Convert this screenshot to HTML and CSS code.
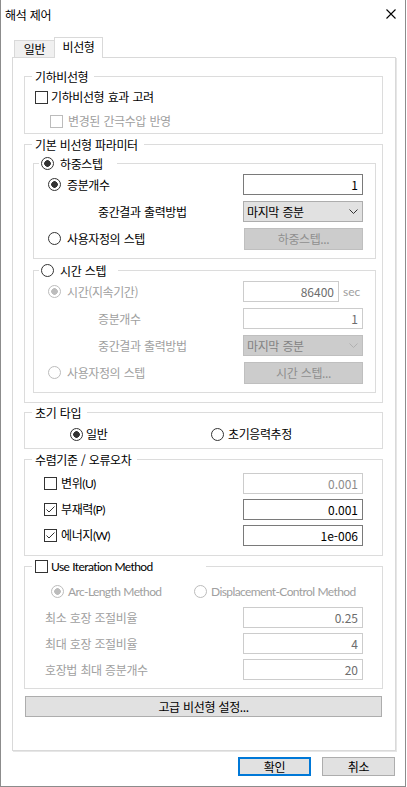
FILE: index.html
```html
<!DOCTYPE html>
<html lang="ko">
<head>
<meta charset="utf-8">
<title>해석 제어</title>
<link rel="stylesheet" href="styles.css">
</head>
<body>
<div class="window">
  <div class="titlebar">
    <span class="title">해석 제어</span>
    <svg class="close" width="10" height="10" viewBox="0 0 10 10"><path d="M0.5 0.5L9.5 9.5M9.5 0.5L0.5 9.5" stroke="#000" stroke-width="1.1" fill="none"/></svg>
  </div>
  <div class="tabs">
    <div class="tab">일반</div>
    <div class="tab active">비선형</div>
  </div>
  <div class="panel">
    <fieldset class="group">
      <legend class="lg">기하비선형</legend>
      <div class="gbody g1">
        <div class="crow"><span class="cb"></span><span class="lbl">기하비선형 효과 고려</span></div>
        <div class="crow indent dis"><span class="cb dis"></span><span class="lbl">변경된 간극수압 반영</span></div>
      </div>
    </fieldset>

    <fieldset class="group g2">
      <legend class="lg">기본 비선형 파라미터</legend>
      <div class="gbody g2body">
        <fieldset class="group inner">
          <legend class="lgc w78"><span class="rb on"></span><span class="lbl">하중스텝</span></legend>
          <div class="ibody">
            <div class="row"><span class="rb on"></span><span class="lbl">증분개수</span><span class="tb">1</span></div>
            <div class="row"><span class="lbl sub">중간결과 출력방법</span><span class="combo"><span>마지막 증분</span><svg width="9" height="5" viewBox="0 0 9 5"><path d="M0.5 0.5L4.5 4.5L8.5 0.5" stroke="#333" fill="none"/></svg></span></div>
            <div class="row"><span class="rb"></span><span class="lbl">사용자정의 스텝</span><span class="btn dis wide">하중스텝...</span></div>
          </div>
        </fieldset>
        <fieldset class="group inner second">
          <legend class="lgc w79"><span class="rb"></span><span class="lbl">시간 스텝</span></legend>
          <div class="ibody dis">
            <div class="row"><span class="rb dis on"></span><span class="lbl">시간(지속기간)</span><span class="ctl"><span class="tb dis short">86400</span><span class="unit lat">sec</span></span></div>
            <div class="row"><span class="lbl sub">증분개수</span><span class="tb dis">1</span></div>
            <div class="row"><span class="lbl sub">중간결과 출력방법</span><span class="combo dis"><span>마지막 증분</span><svg width="9" height="5" viewBox="0 0 9 5"><path d="M0.5 0.5L4.5 4.5L8.5 0.5" stroke="#b0b0b0" fill="none"/></svg></span></div>
            <div class="row"><span class="rb dis"></span><span class="lbl">사용자정의 스텝</span><span class="btn dis wide">시간 스텝...</span></div>
          </div>
        </fieldset>
      </div>
    </fieldset>

    <fieldset class="group g3">
      <legend class="lg">초기 타입</legend>
      <div class="gbody g3body">
        <span class="opt first"><span class="rb on"></span><span class="lbl">일반</span></span>
        <span class="opt"><span class="rb"></span><span class="lbl">초기응력추정</span></span>
      </div>
    </fieldset>

    <fieldset class="group g4">
      <legend class="lg">수렴기준 / 오류오차</legend>
      <div class="gbody g4body">
        <div class="row"><span class="cb"></span><span class="lbl">변위<span class="lat">(U)</span></span><span class="tb dis light">0.001</span></div>
        <div class="row"><span class="cb on"><svg width="11" height="11" viewBox="0 0 11 11"><path d="M1.5 5.5L4 8L9.5 2.5" stroke="#333" stroke-width="1" fill="none"/></svg></span><span class="lbl">부재력<span class="lat">(P)</span></span><span class="tb">0.001</span></div>
        <div class="row"><span class="cb on"><svg width="11" height="11" viewBox="0 0 11 11"><path d="M1.5 5.5L4 8L9.5 2.5" stroke="#333" stroke-width="1" fill="none"/></svg></span><span class="lbl">에너지<span class="lat">(W)</span></span><span class="tb">1e-006</span></div>
      </div>
    </fieldset>

    <fieldset class="group g5">
      <legend class="lgc w174"><span class="cb"></span><span class="lbl lat">Use Iteration Method</span></legend>
      <div class="gbody g5body dis">
        <div class="row radios lat"><span class="opt2 first"><span class="rb dis on"></span><span class="lbl">Arc-Length Method</span></span><span class="opt2"><span class="rb dis"></span><span class="lbl">Displacement-Control Method</span></span></div>
        <div class="row"><span class="lbl">최소 호장 조절비율</span><span class="tb dis">0.25</span></div>
        <div class="row"><span class="lbl">최대 호장 조절비율</span><span class="tb dis">4</span></div>
        <div class="row"><span class="lbl">호장법 최대 증분개수</span><span class="tb dis">20</span></div>
      </div>
    </fieldset>

    <div class="btn advanced">고급 비선형 설정...</div>
  </div>
  <div class="footer">
    <div class="btn foot default">확인</div>
    <div class="btn foot">취소</div>
  </div>
</div>
</body>
</html>
```

FILE: styles.css
```css
* { box-sizing: border-box; }
html, body { margin: 0; padding: 0; background: #fff; }
body {
  width: 407px;
  height: 787px;
  overflow: hidden;
  font-family: "Noto Sans CJK KR", sans-serif;
  font-size: 12px;
  color: #000;
  letter-spacing: -0.4px;
  word-spacing: 0.5px;
}
.lat {
  font-family: Lato, "Noto Sans CJK KR", sans-serif;
  letter-spacing: -0.6px;
  word-spacing: 0.5px;
}

.window {
  width: 406px;
  height: 787px;
  border: 1px solid #8c8c8c;
  border-top: none;
  display: flex;
  flex-direction: column;
  background: #fff;
}

.titlebar {
  height: 30px;
  display: flex;
  align-items: center;
  justify-content: space-between;
  padding: 0 9px 0 4px;
}
.title { line-height: 16px; }
.close { margin-top: -3px; }

.tabs {
  display: flex;
  align-items: flex-end;
  height: 20px;
  margin: 7px 0 0 13px;
}
.tab {
  height: 17px;
  width: 41px;
  border: 1px solid #d9d9d9;
  border-bottom: none;
  background: #f0f0f0;
  text-align: center;
  line-height: 16px;
}
.tab.active {
  position: relative;
  z-index: 1;
  width: 49px;
  height: 21px;
  margin-left: -1px;
  margin-bottom: -1px;
  background: #fff;
  line-height: 17px;
}

.panel {
  margin-left: 11px;
  width: 384px;
  height: 694px;
  border: 1px solid #d9d9d9;
  box-shadow: 1px 1px 0 #e6e6e6;
  padding: 10px 12px 0 11px;
  display: flex;
  flex-direction: column;
}

.group {
  margin: 0;
  padding: 0;
  min-width: 0;
  border: 1px solid #dcdcdc;
}
.lg {
  margin-left: 7px;
  padding: 0 6px 0 3px;
  height: 17px;
  line-height: 17px;
}
.lgc {
  margin-left: 5px;
  padding: 0 0 0 2px;
  height: 17px;
  display: flex;
  align-items: center;
  gap: 6px;
}
.g5 .lgc { margin-left: 7px; padding-left: 3px; gap: 3px; }
.w78 { width: 78px; }
.w79 { width: 79px; }
.w174 { width: 174px; }

.g2 { margin-top: 2px; }
.g3 { margin-top: 1px; }
.g4 { margin-top: 2px; }
.g5 { margin-top: 2px; }

.g1 { padding: 0 0 0 10px; }
.crow { height: 24px; display: flex; align-items: center; gap: 3px; }
.crow.indent { padding-left: 15px; gap: 5px; }

.g2body { padding: 2px 6px 9px 8px; }
.inner.second { margin-top: 3px; }
.ibody {
  padding: 2px 12px 9px 14px;
  display: flex;
  flex-direction: column;
  gap: 6px;
}

.row { height: 21px; display: flex; align-items: center; }
.row > .rb + .lbl { margin-left: 6px; }
.row > .cb + .lbl { margin-left: 4px; }
.row > :last-child:not(.lbl) { margin-left: auto; }
.sub { padding-left: 50px; }

.g3body { padding: 1px 0 2px 45px; height: 27px; display: flex; align-items: center; }
.opt { display: flex; align-items: center; gap: 4px; }
.opt.first { width: 141px; gap: 3px; }

.g4body {
  padding: 5px 19px 9px 19px;
  display: flex;
  flex-direction: column;
  gap: 5px;
}

.g5body {
  padding: 6px 19px 8px 20px;
  display: flex;
  flex-direction: column;
  gap: 5px;
}
.radios { padding-left: 6px; }
.opt2 { display: flex; align-items: center; gap: 4px; }
.opt2.first { width: 143px; }
.g5body .row > .opt2:last-child { margin-left: 0; }

.lbl { line-height: 16px; white-space: nowrap; }
.dis .lbl, .dis.lbl, .unit { color: #a0a0a0; }

.cb {
  width: 13px;
  height: 13px;
  flex: none;
  border: 1px solid #333;
  background: #fff;
  display: flex;
  align-items: center;
  justify-content: center;
}
.cb.dis { border-color: #bcbcbc; }
.rb {
  width: 13px;
  height: 13px;
  flex: none;
  border: 1px solid #333;
  border-radius: 50%;
  background: #fff;
}
.rb.on { background: radial-gradient(circle, #333 0 3px, #fff 3.6px); }
.rb.dis { border-color: #bcbcbc; }
.rb.dis.on { background: radial-gradient(circle, #bcbcbc 0 3px, #fff 3.6px); }

.tb {
  width: 120px;
  height: 21px;
  flex: none;
  border: 1px solid #7a7a7a;
  background: #fff;
  text-align: right;
  padding-right: 4px;
  line-height: 19px;
  letter-spacing: 0;
  color: #000;
}
.tb.dis { border-color: #cccccc; color: #6d6d6d; }
.tb.light { color: #8c8c8c; }
.tb.short { width: 96px; }
.ctl { width: 120px; display: flex; align-items: center; margin-left: auto; }
.unit { margin-left: 4px; line-height: 16px; letter-spacing: 0; }

.combo {
  width: 120px;
  height: 21px;
  flex: none;
  border: 1px solid #adadad;
  background: #e1e1e1;
  display: flex;
  align-items: center;
  justify-content: space-between;
  padding: 0 4px 0 3px;
  line-height: 16px;
}
.combo.dis { border-color: #bfbfbf; background: #cccccc; color: #838383; }

.btn {
  border: 1px solid #adadad;
  background: #e1e1e1;
  display: flex;
  align-items: center;
  justify-content: center;
  line-height: 16px;
}
.btn.dis { border-color: #bfbfbf; background: #cccccc; color: #8f8f8f; }
.btn.wide { width: 119px; height: 22px; flex: none; }
.btn.advanced { margin-top: 7px; height: 21px; width: 357px; margin-left: 1px; }

.footer {
  display: flex;
  justify-content: flex-end;
  gap: 11px;
  margin-top: 6px;
  padding-right: 10px;
}
.btn.foot { width: 73px; height: 19px; }
.btn.default { border: 2px solid #0078d7; }
```
